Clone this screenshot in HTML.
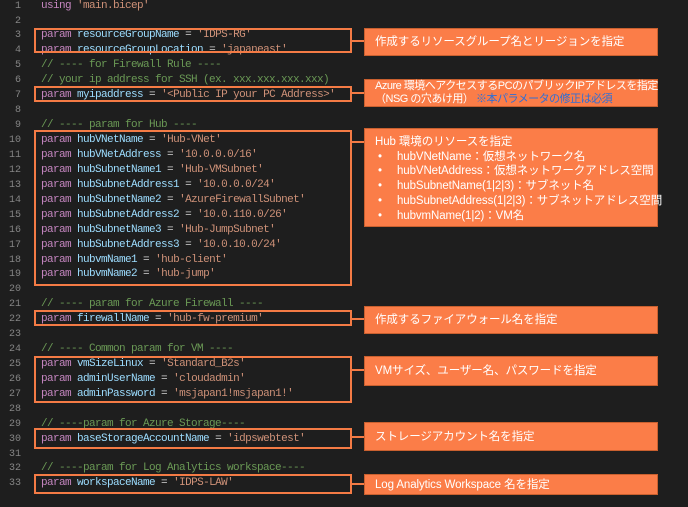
<!DOCTYPE html>
<html><head><meta charset="utf-8"><style>
body{margin:0;width:688px;height:506px;background:#1e1e1e;overflow:hidden;position:relative;font-family:"Liberation Mono",monospace;}
.w{position:absolute;left:0;top:1px;width:688px;height:506px;}
.l{position:absolute;left:0;height:15px;line-height:15px;font-size:11px;letter-spacing:-0.6px;white-space:pre;}
.n{position:absolute;left:0;width:21px;text-align:right;color:#858585;letter-spacing:0;font-size:10px;}
.c{position:absolute;left:41px;color:#d4d4d4;}
.k{color:#c586c0}.v{color:#9cdcfe}.s{color:#ce9178}.m{color:#6a9955}
.b{position:absolute;left:34px;width:314px;border:2px solid #f47b45;}
.h{position:absolute;height:2px;background:#f47b45;}
.co{position:absolute;left:364px;width:294px;background:#fb7d48;border:1px solid #c9602f;box-sizing:border-box;color:#fff;font-family:"Liberation Sans","Noto Sans CJK JP",sans-serif;font-size:11.5px;letter-spacing:-0.1px;line-height:15px;padding-left:10px;white-space:nowrap;}
.blue{color:#2f6fd6}
.d{display:inline-block;width:19px;padding-left:3px;}
</style></head><body>
<div class="w">
<div class="l" style="top:-2px"><span class="n">1</span><span class="c"><span class="k">using</span> <span class="s">'main.bicep'</span></span></div>
<div class="l" style="top:13px"><span class="n">2</span></div>
<div class="l" style="top:27px"><span class="n">3</span><span class="c"><span class="k">param</span> <span class="v">resourceGroupName</span> = <span class="s">'IDPS-RG'</span></span></div>
<div class="l" style="top:42px"><span class="n">4</span><span class="c"><span class="k">param</span> <span class="v">resourceGroupLocation</span> = <span class="s">'japaneast'</span></span></div>
<div class="l" style="top:57px"><span class="n">5</span><span class="c m">// ---- for Firewall Rule ----</span></div>
<div class="l" style="top:72px"><span class="n">6</span><span class="c m">// your ip address for SSH (ex. xxx.xxx.xxx.xxx)</span></div>
<div class="l" style="top:87px"><span class="n">7</span><span class="c"><span class="k">param</span> <span class="v">myipaddress</span> = <span class="s">'&lt;Public IP your PC Address&gt;'</span></span></div>
<div class="l" style="top:102px"><span class="n">8</span></div>
<div class="l" style="top:117px"><span class="n">9</span><span class="c m">// ---- param for Hub ----</span></div>
<div class="l" style="top:132px"><span class="n">10</span><span class="c"><span class="k">param</span> <span class="v">hubVNetName</span> = <span class="s">'Hub-VNet'</span></span></div>
<div class="l" style="top:147px"><span class="n">11</span><span class="c"><span class="k">param</span> <span class="v">hubVNetAddress</span> = <span class="s">'10.0.0.0/16'</span></span></div>
<div class="l" style="top:162px"><span class="n">12</span><span class="c"><span class="k">param</span> <span class="v">hubSubnetName1</span> = <span class="s">'Hub-VMSubnet'</span></span></div>
<div class="l" style="top:177px"><span class="n">13</span><span class="c"><span class="k">param</span> <span class="v">hubSubnetAddress1</span> = <span class="s">'10.0.0.0/24'</span></span></div>
<div class="l" style="top:192px"><span class="n">14</span><span class="c"><span class="k">param</span> <span class="v">hubSubnetName2</span> = <span class="s">'AzureFirewallSubnet'</span></span></div>
<div class="l" style="top:207px"><span class="n">15</span><span class="c"><span class="k">param</span> <span class="v">hubSubnetAddress2</span> = <span class="s">'10.0.110.0/26'</span></span></div>
<div class="l" style="top:222px"><span class="n">16</span><span class="c"><span class="k">param</span> <span class="v">hubSubnetName3</span> = <span class="s">'Hub-JumpSubnet'</span></span></div>
<div class="l" style="top:237px"><span class="n">17</span><span class="c"><span class="k">param</span> <span class="v">hubSubnetAddress3</span> = <span class="s">'10.0.10.0/24'</span></span></div>
<div class="l" style="top:252px"><span class="n">18</span><span class="c"><span class="k">param</span> <span class="v">hubvmName1</span> = <span class="s">'hub-client'</span></span></div>
<div class="l" style="top:266px"><span class="n">19</span><span class="c"><span class="k">param</span> <span class="v">hubvmName2</span> = <span class="s">'hub-jump'</span></span></div>
<div class="l" style="top:281px"><span class="n">20</span></div>
<div class="l" style="top:296px"><span class="n">21</span><span class="c m">// ---- param for Azure Firewall ----</span></div>
<div class="l" style="top:311px"><span class="n">22</span><span class="c"><span class="k">param</span> <span class="v">firewallName</span> = <span class="s">'hub-fw-premium'</span></span></div>
<div class="l" style="top:326px"><span class="n">23</span></div>
<div class="l" style="top:341px"><span class="n">24</span><span class="c m">// ---- Common param for VM ----</span></div>
<div class="l" style="top:356px"><span class="n">25</span><span class="c"><span class="k">param</span> <span class="v">vmSizeLinux</span> = <span class="s">'Standard_B2s'</span></span></div>
<div class="l" style="top:371px"><span class="n">26</span><span class="c"><span class="k">param</span> <span class="v">adminUserName</span> = <span class="s">'cloudadmin'</span></span></div>
<div class="l" style="top:386px"><span class="n">27</span><span class="c"><span class="k">param</span> <span class="v">adminPassword</span> = <span class="s">'msjapan1!msjapan1!'</span></span></div>
<div class="l" style="top:401px"><span class="n">28</span></div>
<div class="l" style="top:416px"><span class="n">29</span><span class="c m">// ----param for Azure Storage----</span></div>
<div class="l" style="top:431px"><span class="n">30</span><span class="c"><span class="k">param</span> <span class="v">baseStorageAccountName</span> = <span class="s">'idpswebtest'</span></span></div>
<div class="l" style="top:446px"><span class="n">31</span></div>
<div class="l" style="top:460px"><span class="n">32</span><span class="c m">// ----param for Log Analytics workspace----</span></div>
<div class="l" style="top:475px"><span class="n">33</span><span class="c"><span class="k">param</span> <span class="v">workspaceName</span> = <span class="s">'IDPS-LAW'</span></span></div>
</div>

<div class="b" style="top:28px;height:21px"></div><div class="h" style="left:350px;width:14px;top:40px"></div>
<div class="b" style="top:86px;height:12px"></div><div class="h" style="left:350px;width:14px;top:92px"></div>
<div class="b" style="top:130px;height:152px"></div><div class="h" style="left:350px;width:14px;top:141px"></div>
<div class="b" style="top:310px;height:12px"></div><div class="h" style="left:350px;width:14px;top:318px"></div>
<div class="b" style="top:356px;height:43px"></div><div class="h" style="left:350px;width:14px;top:369px"></div>
<div class="b" style="top:428px;height:17px"></div><div class="h" style="left:350px;width:14px;top:436px"></div>
<div class="b" style="top:474px;height:16px"></div><div class="h" style="left:350px;width:14px;top:483px"></div>

<div class="co" style="top:28px;height:28px;padding-top:6px">作成するリソースグループ名とリージョンを指定</div>
<div class="co" style="top:79px;height:28px;padding-top:0px;line-height:13px;font-size:11px;letter-spacing:-0.5px">Azure 環境へアクセスするPCのパブリックIPアドレスを指定<br>（NSG の穴あけ用） <span class="blue">※本パラメータの修正は必須</span></div>
<div class="co" style="top:128px;height:99px;padding-top:6px;line-height:14.7px">Hub 環境のリソースを指定<br>
<span class="d">•</span>hubVNetName：仮想ネットワーク名<br>
<span class="d">•</span>hubVNetAddress：仮想ネットワークアドレス空間<br>
<span class="d">•</span>hubSubnetName(1|2|3)：サブネット名<br>
<span class="d">•</span>hubSubnetAddress(1|2|3)：サブネットアドレス空間<br>
<span class="d">•</span>hubvmName(1|2)：VM名</div>
<div class="co" style="top:306px;height:28px;padding-top:6px">作成するファイアウォール名を指定</div>
<div class="co" style="top:356px;height:30px;padding-top:7px">VMサイズ、ユーザー名、パスワードを指定</div>
<div class="co" style="top:422px;height:29px;padding-top:7px">ストレージアカウント名を指定</div>
<div class="co" style="top:474px;height:21px;padding-top:3px">Log Analytics Workspace 名を指定</div>
</body></html>
